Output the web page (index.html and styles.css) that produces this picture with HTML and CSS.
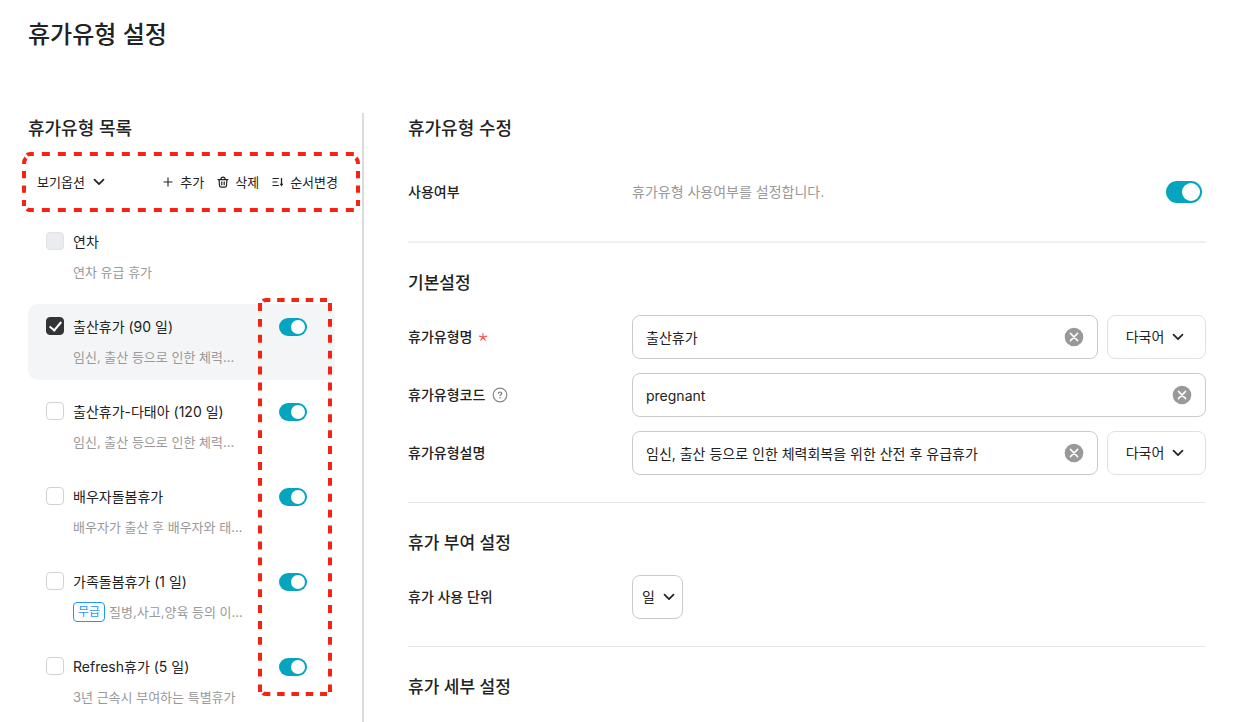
FILE: index.html
```html
<!DOCTYPE html>
<html lang="ko">
<head>
<meta charset="utf-8">
<meta name="viewport" content="width=device-width, initial-scale=1">
<title>휴가유형 설정</title>
<link rel="stylesheet" href="styles.css">
</head>
<body>
<svg class="symbols" aria-hidden="true">
  <symbol id="chevron" viewBox="0 0 12 12"><path d="M1.5 3.7 6 8.2l4.5-4.5" fill="none" stroke="currentColor" stroke-width="1.7" stroke-linecap="round" stroke-linejoin="round"/></symbol>
  <symbol id="clear" viewBox="0 0 20 20"><circle cx="10" cy="10" r="9.3" fill="#98999b"/><path d="M6.4 6.4l7.2 7.2M13.6 6.4l-7.2 7.2" stroke="#fff" stroke-width="1.5" stroke-linecap="round"/></symbol>
</svg>
<header class="page-header"><h1 class="page-title">휴가유형 설정</h1></header>
<main class="layout">
  <aside class="sidebar">
    <h2 class="panel-title">휴가유형 목록</h2>
    <div class="toolbar">
      <button class="tool tool-view" type="button">보기옵션 <svg class="chevron"><use href="#chevron"/></svg></button>
      <div class="tool-actions">
        <button class="tool" type="button"><svg class="tool-icon" viewBox="0 0 12 12"><path d="M6 1.5v9M1.5 6h9" stroke="currentColor" stroke-width="1.1"/></svg>추가</button>
        <button class="tool" type="button"><svg class="tool-icon" viewBox="0 0 12 12" fill="none" stroke="currentColor" stroke-width="1.2" stroke-linecap="round" stroke-linejoin="round"><path d="M1 3.6h10M3.8 3.4C4 1.9 4.6 1.2 6 1.2s2 .7 2.2 2.2M2.1 3.7l.4 5.9c.1 1 .6 1.5 1.6 1.5h3.8c1 0 1.5-.5 1.6-1.5l.4-5.9M4.8 5.9v2.8M7.2 5.9v2.8"/></svg>삭제</button>
        <button class="tool" type="button"><svg class="tool-icon" viewBox="0 0 12 12" fill="none" stroke="currentColor"><path d="M.5 2.5h6.4M.5 6h5M.5 9.5h6.4"/><path d="M9.5 2v6.5" stroke-width="1.3"/><path d="M7.7 7.8h3.6L9.5 10.4z" fill="currentColor" stroke="none"/></svg>순서변경</button>
      </div>
    </div>
    <ul class="leave-list">
      <li class="leave">
        <input class="check" type="checkbox" id="l1" disabled>
        <div class="leave-text"><label class="leave-name" for="l1">연차</label><p class="leave-desc">연차 유급 휴가</p></div>
      </li>
      <li class="leave leave-selected">
        <input class="check" type="checkbox" id="l2" checked>
        <div class="leave-text"><label class="leave-name" for="l2">출산휴가 (90 일)</label><p class="leave-desc">임신, 출산 등으로 인한 체력...</p></div>
        <input class="switch" type="checkbox" role="switch" aria-label="출산휴가 사용" checked>
      </li>
      <li class="leave">
        <input class="check" type="checkbox" id="l3">
        <div class="leave-text"><label class="leave-name" for="l3">출산휴가-다태아 (120 일)</label><p class="leave-desc">임신, 출산 등으로 인한 체력...</p></div>
        <input class="switch" type="checkbox" role="switch" aria-label="출산휴가-다태아 사용" checked>
      </li>
      <li class="leave">
        <input class="check" type="checkbox" id="l4">
        <div class="leave-text"><label class="leave-name" for="l4">배우자돌봄휴가</label><p class="leave-desc">배우자가 출산 후 배우자와 태...</p></div>
        <input class="switch" type="checkbox" role="switch" aria-label="배우자돌봄휴가 사용" checked>
      </li>
      <li class="leave">
        <input class="check" type="checkbox" id="l5">
        <div class="leave-text"><label class="leave-name" for="l5">가족돌봄휴가 (1 일)</label><p class="leave-desc"><span class="badge">무급</span>질병,사고,양육 등의 이...</p></div>
        <input class="switch" type="checkbox" role="switch" aria-label="가족돌봄휴가 사용" checked>
      </li>
      <li class="leave">
        <input class="check" type="checkbox" id="l6">
        <div class="leave-text"><label class="leave-name" for="l6">Refresh휴가 (5 일)</label><p class="leave-desc">3년 근속시 부여하는 특별휴가</p></div>
        <input class="switch" type="checkbox" role="switch" aria-label="Refresh휴가 사용" checked>
      </li>
    </ul>
    <!-- Dashed callouts around the toolbar and the switch column -->
    <svg class="callout callout-toolbar" viewBox="0 0 338 60" aria-hidden="true">
      <path d="M5 3Q6 2 8 2H334M5 57Q6 58 8 58H334" stroke-dasharray="8 8" stroke-dashoffset="1"/>
      <path d="M2 12Q2 8 4 6M2 19V54M336 12Q336 8 334 6M336 19V54" stroke-dasharray="7.3 7.2"/>
    </svg>
    <svg class="callout callout-switches" viewBox="0 0 74 398" aria-hidden="true">
      <path d="M5 3Q6 2 8 2H69M5 395Q6 396 8 396H69" stroke-dasharray="7.5 6.8"/>
      <path d="M2 5V394M72 5V394" stroke-dasharray="7.9 8"/>
    </svg>
  </aside>
  <form class="editor">
    <section class="section section-usage">
      <h2 class="panel-title">휴가유형 수정</h2>
      <div class="row">
        <label class="row-label" for="usage">사용여부</label>
        <p class="hint">휴가유형 사용여부를 설정합니다.</p>
        <input class="switch switch-large" type="checkbox" role="switch" id="usage" checked>
      </div>
    </section>
    <section class="section">
      <h3 class="section-title">기본설정</h3>
      <div class="rows">
        <div class="row">
          <label class="row-label" for="name">휴가유형명<svg class="required" viewBox="0 0 10 10"><path d="M5 1.5v3.7M5 5.2l3.6-1.1M5 5.2l2.2 3M5 5.2l-2.2 3M5 5.2 1.4 4.1" stroke="#ff4b4b" stroke-width="1.1" stroke-linecap="round"/></svg></label>
          <div class="field"><input class="input" id="name" type="text" value="출산휴가"><button class="clear" type="button" aria-label="지우기"><svg><use href="#clear"/></svg></button></div>
          <button class="language" type="button">다국어 <svg class="chevron"><use href="#chevron"/></svg></button>
        </div>
        <div class="row">
          <label class="row-label" for="code">휴가유형코드<svg class="help" viewBox="0 0 16 16" fill="none" stroke="#858585"><circle cx="8" cy="8" r="6.8" stroke-width="1.2"/><path d="M6.3 6.7c0-2.2 3.4-2.1 3.4-.2 0 1.2-1.6 1.3-1.6 2.4M8.1 10.1v1.2" stroke-width="1.3"/></svg></label>
          <div class="field"><input class="input" id="code" type="text" value="pregnant"><button class="clear" type="button" aria-label="지우기"><svg><use href="#clear"/></svg></button></div>
        </div>
        <div class="row">
          <label class="row-label" for="desc">휴가유형설명</label>
          <div class="field"><input class="input" id="desc" type="text" value="임신, 출산 등으로 인한 체력회복을 위한 산전 후 유급휴가"><button class="clear" type="button" aria-label="지우기"><svg><use href="#clear"/></svg></button></div>
          <button class="language" type="button">다국어 <svg class="chevron"><use href="#chevron"/></svg></button>
        </div>
      </div>
    </section>
    <section class="section">
      <h3 class="section-title">휴가 부여 설정</h3>
      <div class="row">
        <label class="row-label" for="unit">휴가 사용 단위</label>
        <div class="select-wrap"><select class="select" id="unit"><option>일</option></select><svg class="chevron"><use href="#chevron"/></svg></div>
      </div>
    </section>
    <section class="section section-last"><h3 class="section-title">휴가 세부 설정</h3></section>
  </form>
</main>
</body>
</html>
```
FILE: styles.css
```css
*, *::before { box-sizing: border-box; }

body {
  margin: 0;
  min-height: 100vh;
  display: flex;
  flex-direction: column;
  background: #fff;
  color: #222;
  font: 14px/22px Inter, "Noto Sans CJK KR", sans-serif;
}

h1, h2, h3, p, ul { margin: 0; padding: 0; }
ul { list-style: none; }
button, input, select { font: inherit; color: inherit; margin: 0; }
button { padding: 0; border: 0; background: none; cursor: pointer; }
svg { display: block; flex: none; }

.symbols { position: absolute; width: 0; height: 0; }
.chevron { width: 12px; height: 12px; }

.page-header { padding: 17px 28px 60px; }
.page-title { font-size: 24px; line-height: 36px; font-weight: 500; }

.layout { flex: 1; display: flex; padding: 0 34px 0 28px; }

.sidebar {
  position: relative;
  flex: none;
  width: 336px;
  padding-right: 27px;
  border-right: 2px solid #dcdcdc;
}

.panel-title { font-size: 18px; line-height: 32px; font-weight: 500; }

.toolbar {
  display: flex;
  justify-content: space-between;
  align-items: center;
  height: 30px;
  margin: 22px -3px 22px 9px;
  font-size: 13px;
}
.tool { display: flex; align-items: center; gap: 6px; }
.tool-view { gap: 8px; }
.tool-actions { display: flex; gap: 13px; }
.tool-icon { width: 12px; height: 12px; }

.leave-list { display: flex; flex-direction: column; gap: 9px; }
.leave {
  display: flex;
  align-items: flex-start;
  gap: 9px;
  padding: 12px 28px 12px 18px;
  border-radius: 10px;
}
.leave-selected { background: #f4f5f7; }
.leave-text { flex: 1; min-width: 0; display: grid; gap: 8px; }
.leave-name { white-space: nowrap; }
.leave-desc {
  display: flex;
  align-items: center;
  gap: 4px;
  font-size: 13px;
  color: #999;
  white-space: nowrap;
}
.badge {
  padding: 0 4px;
  border: 1px solid #1e96ff;
  border-radius: 4px;
  color: #1e96ff;
  font-size: 12px;
  line-height: 18px;
}

.check {
  appearance: none;
  flex: none;
  width: 18px;
  height: 18px;
  margin-top: 1px;
  border: 1px solid #d2d2d4;
  border-radius: 4px;
  background: #fff;
}
.check:disabled { background: #ebecf0; border-color: #e0e1e5; }
.check:checked { background: #333436; border-color: #333436; }
.check:checked::before {
  content: "";
  display: block;
  width: 7px;
  height: 12px;
  margin: 1px 5px;
  border: solid #fff;
  border-width: 0 2px 2px 0;
  transform: rotate(40deg);
}

.switch {
  appearance: none;
  flex: none;
  display: flex;
  justify-content: flex-end;
  width: 28px;
  height: 18px;
  margin-top: 2px;
  padding: 2px;
  border-radius: 11px;
  background: #06a5bf;
}
.switch::before {
  content: "";
  height: 100%;
  aspect-ratio: 1;
  border-radius: 50%;
  background: #fff;
}
.switch-large { width: 36px; height: 22px; margin: 0 4px 0 auto; }

.callout { position: absolute; fill: none; stroke: #f52314; stroke-width: 4; pointer-events: none; }
.callout-toolbar { left: -6px; top: 39px; width: 338px; height: 60px; }
.callout-switches { left: 230px; top: 185px; width: 74px; height: 398px; }

.editor { flex: 1; min-width: 0; margin-left: 44px; }
.section { padding: 27px 0; border-bottom: 1px solid #e8e8e8; }
.section-usage { padding-top: 0; border-bottom: 2px solid #f0f0f0; }
.section-usage .panel-title { margin-bottom: 25px; }
.section-last { padding-bottom: 0; border-bottom: 0; }
.section-title { font-size: 17px; line-height: 26px; font-weight: 500; }
.section-title + * { margin-top: 19px; }

.rows { display: grid; gap: 14px; }
.row { display: flex; align-items: center; min-height: 44px; }
.row-label { flex: none; width: 224px; display: flex; align-items: center; font-weight: 500; }
.required { width: 10px; height: 10px; margin-left: 6px; }
.help { width: 16px; height: 16px; margin-left: 7px; }
.hint { color: #999; }

.field { position: relative; flex: 1; min-width: 0; }
.input {
  display: block;
  width: 100%;
  height: 44px;
  padding: 0 44px 0 13px;
  border: 1px solid #c9cacf;
  border-radius: 8px;
  background: #fff;
}
.clear { position: absolute; top: 12px; right: 14px; }
.clear svg { width: 20px; height: 20px; }

.language {
  display: flex;
  align-items: center;
  justify-content: center;
  gap: 8px;
  width: 99px;
  height: 44px;
  margin-left: 9px;
  padding-right: 3px;
  border: 1px solid #e1e1e3;
  border-radius: 8px;
}

.select-wrap { position: relative; }
.select {
  appearance: none;
  display: block;
  width: 51px;
  height: 44px;
  padding: 0 24px 0 9px;
  border: 1px solid #c9cacf;
  border-radius: 8px;
  background: #fff;
}
.select-wrap .chevron { position: absolute; right: 8px; top: 16px; pointer-events: none; }
```
